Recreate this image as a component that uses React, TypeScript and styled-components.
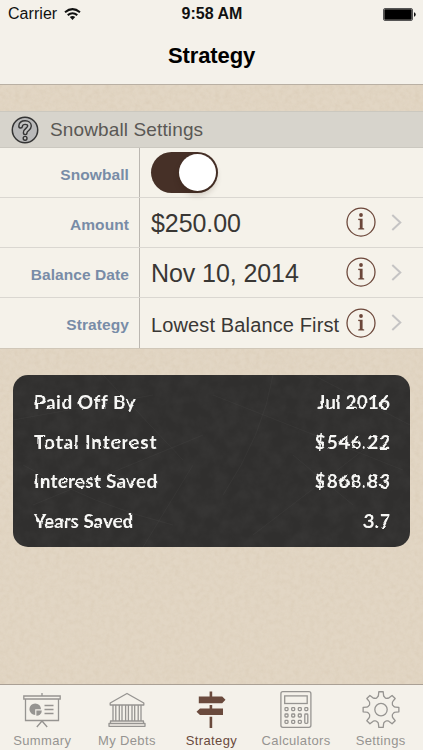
import React from 'react';
import styled, { createGlobalStyle } from 'styled-components';

const svgUrl = (svg: string) => `url("data:image/svg+xml,${encodeURIComponent(svg)}")`;

const paper = svgUrl(
  `<svg xmlns="http://www.w3.org/2000/svg" width="200" height="200"><filter id="p" x="0" y="0" width="100%" height="100%"><feTurbulence type="fractalNoise" baseFrequency="0.2" numOctaves="3" seed="4" stitchTiles="stitch"/><feColorMatrix values="0 0 0 0 0.5  0 0 0 0 0.38  0 0 0 0 0.24  0.2 0.12 0 0 -0.12"/></filter><rect width="200" height="200" filter="url(#p)"/></svg>`,
);

const slate = svgUrl(
  `<svg xmlns="http://www.w3.org/2000/svg" width="397" height="172"><filter id="s" x="0" y="0" width="100%" height="100%"><feTurbulence type="fractalNoise" baseFrequency="0.07" numOctaves="4" seed="9"/><feColorMatrix values="0 0 0 0 1  0 0 0 0 1  0 0 0 0 1  0.06 0 0 0 -0.02"/></filter><rect width="397" height="172" filter="url(#s)"/><g fill="none" stroke="#fff" stroke-opacity=".03"><path d="M0 45L140 20M90 0L170 85M20 130L190 60M130 172L180 90M200 20L390 95M240 160L370 60M280 80L340 130M300 0L397 50M10 90Q80 130 160 150M210 120Q250 60 260 0"/></g></svg>`,
);

const GlobalStyle = createGlobalStyle`
  * { box-sizing: border-box; }
  html, body { margin: 0; padding: 0; }
  body { font-family: "Liberation Sans", Arial, sans-serif; }
  svg { display: block; }
`;

const Screen = styled.div`
  width: 423px;
  height: 750px;
  display: flex;
  flex-direction: column;
  overflow: hidden;
  background: #e2d6c4 ${paper};
`;

const Header = styled.header`
  height: 85px;
  flex: none;
  background: #f4f1ea;
  border-bottom: 1px solid #b9b0a4;
`;

const StatusBar = styled.div`
  height: 28px;
  padding: 0 7px 0 8px;
  display: grid;
  grid-template-columns: 1fr auto 1fr;
  align-items: center;
  font-size: 16px;
  line-height: 28px;
  color: #111;
`;

const Carrier = styled.div`
  display: flex;
  align-items: center;
  gap: 7px;
  letter-spacing: 0.05px;
`;

const Clock = styled.div`
  font-weight: 700;
`;

const BatterySlot = styled.div`
  display: flex;
  justify-content: flex-end;
`;

const Title = styled.h1`
  margin: 0;
  text-align: center;
  font-size: 22px;
  line-height: 56px;
  font-weight: 700;
  letter-spacing: -0.1px;
  color: #000;
`;

const Main = styled.main`
  flex: 1;
  padding-top: 26px;
`;

const SectionHeader = styled.div`
  height: 37px;
  padding-left: 11px;
  display: flex;
  align-items: center;
  gap: 11px;
  background: #d7d4cc;
  border-top: 1px solid #cbc8bf;
  border-bottom: 1px solid #cbc8c0;
`;

const SectionTitle = styled.h2`
  margin: 0;
  font-size: 19px;
  line-height: 36px;
  font-weight: 400;
  letter-spacing: 0.13px;
  color: #5a5855;
`;

const SettingRow = styled.div`
  height: 50px;
  display: grid;
  grid-template-columns: 140px 1fr;
  background: #f5f2ea;
  border-bottom: 1px solid #dad7d1;
  &:last-child { border-bottom-color: #d0c7b8; height: 51px; }
`;

const RowLabel = styled.div`
  padding: 4px 10px 0 0;
  border-right: 1px solid #bbb7b1;
  text-align: right;
  font-size: 15.5px;
  line-height: 45px;
  font-weight: 700;
  letter-spacing: 0.08px;
  color: #788ca7;
`;

const RowContent = styled.div`
  display: flex;
  align-items: center;
  padding: 0 20px 1px 11px;
`;

const Value = styled.div<{ $small?: boolean }>`
  flex: 1;
  white-space: nowrap;
  padding-top: ${(p) => (p.$small ? 4 : 2)}px;
  font-size: ${(p) => (p.$small ? 20 : 25)}px;
  line-height: 44px;
  letter-spacing: ${(p) => (p.$small ? 0.13 : -0.08)}px;
  color: #393734;
`;

const RowIcons = styled.div`
  display: flex;
  align-items: center;
  gap: 15px;
`;

const Toggle = styled.div`
  width: 67px;
  height: 41px;
  margin-top: 1px;
  padding: 2px;
  border-radius: 21px;
  background: #463027;
  display: flex;
  justify-content: flex-end;
`;

const Knob = styled.div`
  width: 37px;
  height: 37px;
  border-radius: 50%;
  background: #fff;
  box-shadow: 0 4px 6px rgba(40, 20, 10, 0.2);
`;

const Board = styled.section`
  position: relative;
  height: 172px;
  margin: 26px 13px 0;
  padding: 7px 20px 0 21px;
  border-radius: 15px;
  background: #302f2e ${slate};
`;

const BoardRow = styled.div`
  height: 39.6px;
  display: flex;
  align-items: center;
  justify-content: space-between;
  font-family: "Chalkduster", "Lato", sans-serif;
  font-weight: 700;
  font-size: 19px;
  color: #f7f7f5;
  filter: url(#chalk);
`;

const BoardText = styled.span<{ $spacing: number }>`
  letter-spacing: ${(p) => p.$spacing}px;
  margin-right: ${(p) => -p.$spacing}px;
`;

const FilterDefs = styled.svg`
  position: absolute;
  width: 0;
  height: 0;
`;

const TabBar = styled.nav`
  height: 66px;
  flex: none;
  display: grid;
  grid-template-columns: repeat(5, 84.6px);
  background: #f4f1ea;
  border-top: 1px solid #aaa095;
`;

const Tab = styled.div<{ $active?: boolean }>`
  display: flex;
  flex-direction: column;
  align-items: center;
  padding-top: 5px;
  color: ${(p) => (p.$active ? '#6a4a3d' : '#969491')};
`;

const TabLabel = styled.span`
  margin-top: 4px;
  font-size: 13px;
  line-height: 17px;
  letter-spacing: 0.36px;
  white-space: nowrap;
`;

const WifiIcon = () => (
  <svg width="17" height="12" viewBox="0 0 17 12" fill="none" stroke="#111" strokeWidth="2">
    <path d="M1 4.2Q8.5 -2 16 4.2M3.7 7.1Q8.5 3.3 13.3 7.1" />
    <path d="M5.8 9.1Q8.5 7 11.2 9.1L8.5 12Z" fill="#111" stroke="none" />
  </svg>
);

const BatteryIcon = () => (
  <svg width="33" height="13" viewBox="0 0 33 13">
    <rect x=".5" y=".5" width="29" height="12" rx="1.5" fill="#f4f1ea" stroke="#555" />
    <rect x="1.3" y="1.3" width="27.4" height="10.4" rx=".6" fill="#000" />
    <path d="M31 4.3q1.7.3 1.7 2.2T31 8.7Z" fill="#111" />
  </svg>
);

const HelpIcon = () => (
  <svg width="28" height="28" viewBox="0 0 28 28" fill="none">
    <circle cx="14" cy="14" r="12.7" fill="#b9b9b9" stroke="#343434" strokeWidth="1.5" />
    <path d="M9.6 10.2C9.8 7.7 11.5 6.6 14.2 6.6C16.9 6.6 18.5 8.1 18.5 10.1C18.5 13.4 14.2 13.2 14.2 16.8" stroke="#343434" strokeWidth="5" strokeLinecap="round" />
    <path d="M9.6 10.2C9.8 7.7 11.5 6.6 14.2 6.6C16.9 6.6 18.5 8.1 18.5 10.1C18.5 13.4 14.2 13.2 14.2 16.8" stroke="#c3c3c2" strokeWidth="2.2" strokeLinecap="round" />
    <circle cx="14.1" cy="22.3" r="1.9" fill="#c3c3c2" stroke="#343434" strokeWidth="1.4" />
  </svg>
);

const InfoIcon = () => (
  <svg width="30" height="30" viewBox="0 0 30 30">
    <circle cx="15" cy="15" r="14" fill="none" stroke="#6b4639" strokeWidth="1.25" />
    <circle cx="15" cy="8" r="1.9" fill="#6b4639" />
    <path d="M12.2 11.8H16.6V20.9L18.2 21.4V22.5H12.2V21.4L13.8 20.9V13.3L12.2 12.9Z" fill="#6b4639" />
  </svg>
);

const Chevron = () => (
  <svg width="12" height="17" viewBox="0 0 12 17" fill="none" stroke="#c5c4c4" strokeWidth="2">
    <path d="M1.3 1L9.3 8.5L1.3 16" />
  </svg>
);

const SummaryIcon = () => (
  <svg width="38" height="38" viewBox="0 0 38 38" fill="none" stroke="currentColor" strokeWidth="1.3">
    <path d="M19 3V6M.8 6H37.2V9H.8ZM2.5 9V30.5H35.5V9M19 30.5V32M19 31L13.8 37M19 31L24.2 37" />
    <path d="M12.2 19.2V25A5.8 5.8 0 1 1 18 19.2Z" fill="currentColor" stroke="none" />
    <path d="M13.4 20.4H18.8A5.4 5.4 0 0 1 13.4 25.8Z" fill="currentColor" stroke="none" />
    <path d="M21.5 15.5H30.5M21.5 19.5H30.5M21.5 23.5H30.5" />
  </svg>
);

const BankIcon = () => (
  <svg width="38" height="38" viewBox="0 0 38 38" fill="none" stroke="currentColor" strokeWidth="1.3" strokeLinejoin="round">
    <path d="M19 3.5L2.2 13V15H35.8V13ZM5 15V31M7.8 15V31M11.3 15V31M14 15V31M17.6 15V31M20.4 15V31M24 15V31M26.7 15V31M30.2 15V31M33 15V31M2.5 31H35.5V33.5H2.5ZM1 33.5H37V36.3H1Z" />
  </svg>
);

const SignpostIcon = () => (
  <svg width="38" height="38" viewBox="0 0 38 38" fill="currentColor">
    <path d="M17.6 1.5H20.2V6.4H30.2L33.5 9.8L30.2 13.2H6.8V6.4H17.6ZM17.6 15H20.2V18.4H31V25.1H8L4.5 21.8L8 18.4H17.6ZM17.6 26.8H20.2V38.5H17.6Z" />
  </svg>
);

const CalculatorIcon = () => (
  <svg width="38" height="38" viewBox="0 0 38 38" fill="none" stroke="currentColor" strokeWidth="1.3">
    <rect x="3.9" y="1.7" width="30" height="35.6" rx="2" />
    <rect x="7.7" y="5.9" width="22.5" height="7.6" />
    {[17.6, 24, 30.4].map((y) =>
      [8, 14.7, 21.3, 27.8].map((x) =>
        x === 27.8 && y > 18 ? null : <rect key={`${x}-${y}`} x={x} y={y} width="3" height="3" rx=".8" />,
      ),
    )}
    <rect x="27.8" y="24" width="3" height="9.4" rx=".8" />
  </svg>
);

const gearPath = () => {
  const point = (deg: number, r: number) => {
    const a = (deg * Math.PI) / 180;
    return `${(19 + r * Math.sin(a)).toFixed(2)} ${(19.6 - r * Math.cos(a)).toFixed(2)}`;
  };
  let d = '';
  for (let i = 0; i < 8; i++) {
    const c = i * 45;
    d += `${i ? 'L' : 'M'}${point(c - 7, 18)}L${point(c + 7, 18)}L${point(c + 10, 14.7)}Q${point(c + 11, 13.5)} ${point(c + 16, 13)}Q${point(c + 22.5, 11.9)} ${point(c + 29, 13)}Q${point(c + 34, 13.5)} ${point(c + 35, 14.7)}`;
  }
  return d + 'Z';
};

const GearIcon = () => (
  <svg width="38" height="38" viewBox="0 0 38 38" fill="none" stroke="currentColor" strokeWidth="1.3" strokeLinejoin="round" overflow="visible">
    <path d={gearPath()} />
    <circle cx="19" cy="19.6" r="6.2" />
  </svg>
);

const settings = [
  { label: 'Amount', value: '$250.00' },
  { label: 'Balance Date', value: 'Nov 10, 2014' },
  { label: 'Strategy', value: 'Lowest Balance First', small: true },
];

const results = [
  { label: 'Paid Off By', value: 'Jul 2016', ls: 0.5, vs: 0.1 },
  { label: 'Total Interest', value: '$546.22', ls: 0.85, vs: 0.75 },
  { label: 'Interest Saved', value: '$868.83', ls: 0.2, vs: 0.75 },
  { label: 'Years Saved', value: '3.7', ls: -0.1, vs: 0 },
];

const tabs = [
  { label: 'Summary', Icon: SummaryIcon },
  { label: 'My Debts', Icon: BankIcon },
  { label: 'Strategy', Icon: SignpostIcon, active: true },
  { label: 'Calculators', Icon: CalculatorIcon },
  { label: 'Settings', Icon: GearIcon },
];

export default function App() {
  return (
    <>
      <GlobalStyle />
      <Screen>
        <Header>
          <StatusBar>
            <Carrier>Carrier<WifiIcon /></Carrier>
            <Clock>9:58 AM</Clock>
            <BatterySlot><BatteryIcon /></BatterySlot>
          </StatusBar>
          <Title>Strategy</Title>
        </Header>
        <Main>
          <SectionHeader>
            <HelpIcon />
            <SectionTitle>Snowball Settings</SectionTitle>
          </SectionHeader>
          <div>
            <SettingRow>
              <RowLabel>Snowball</RowLabel>
              <RowContent><Toggle role="switch" aria-checked="true"><Knob /></Toggle></RowContent>
            </SettingRow>
            {settings.map((s) => (
              <SettingRow key={s.label}>
                <RowLabel>{s.label}</RowLabel>
                <RowContent>
                  <Value $small={s.small}>{s.value}</Value>
                  <RowIcons><InfoIcon /><Chevron /></RowIcons>
                </RowContent>
              </SettingRow>
            ))}
          </div>
          <Board>
            <FilterDefs aria-hidden="true">
              <filter id="chalk" x="0" y="0" width="100%" height="100%">
                <feTurbulence type="fractalNoise" baseFrequency="0.11" numOctaves="2" seed="7" result="n" />
                <feDisplacementMap in="SourceGraphic" in2="n" scale="3" xChannelSelector="R" yChannelSelector="G" />
              </filter>
            </FilterDefs>
            {results.map((r) => (
              <BoardRow key={r.label}>
                <BoardText $spacing={r.ls}>{r.label}</BoardText>
                <BoardText $spacing={r.vs}>{r.value}</BoardText>
              </BoardRow>
            ))}
          </Board>
        </Main>
        <TabBar>
          {tabs.map(({ label, Icon, active }) => (
            <Tab key={label} $active={active}>
              <Icon />
              <TabLabel>{label}</TabLabel>
            </Tab>
          ))}
        </TabBar>
      </Screen>
    </>
  );
}
